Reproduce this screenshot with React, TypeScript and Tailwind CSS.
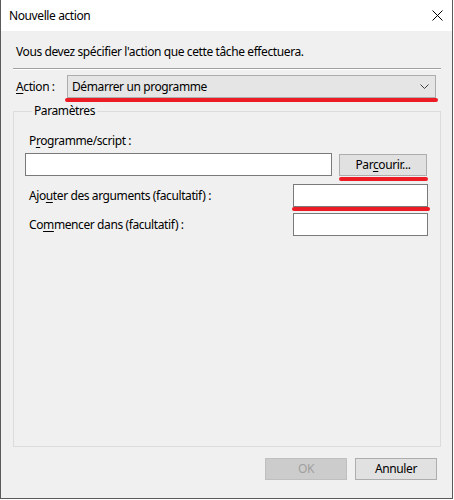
import { ReactNode } from "react";

function Mn({ children }: { children: ReactNode }) {
  return <span className="underline underline-offset-2 decoration-1">{children}</span>;
}

function RedMark({ className }: { className: string }) {
  return <div className={`h-[4px] rounded-full bg-[#ed1c24] ${className}`} />;
}

function TextBox({ className }: { className: string }) {
  return <div className={`h-[23px] border border-[#7a7a7a] bg-white ${className}`} />;
}

export default function App() {
  return (
    <div className="w-[454px] h-[500px] bg-white font-['Noto_Sans',sans-serif] text-[12px] leading-[16px] tracking-[-0.4px] text-black">
      <div className="w-[453px] h-[499px] flex flex-col border-x border-b border-[#5a5a5a]">
        {/* Title bar */}
        <div className="h-[31px] flex items-center justify-between bg-white pl-[8px] pr-[9px]">
          <span>Nouvelle action</span>
          <svg width="11" height="11" viewBox="0 0 11 11" className="text-black">
            <path d="M0.5 0.5 L10.5 10.5 M10.5 0.5 L0.5 10.5" stroke="currentColor" strokeWidth="1" />
          </svg>
        </div>

        <div className="flex-1 flex flex-col bg-[#f0f0f0] pt-[13px]">
          <p className="pl-[15px]">Vous devez spécifier l'action que cette tâche effectuera.</p>

          {/* Etched separator */}
          <div className="mt-[8px] ml-[12px] w-[428px] border-t border-b border-t-[#a0a0a0] border-b-white" />

          {/* Action row */}
          <div className="mt-[5px] flex">
            <span className="pl-[15px] w-[66px] h-[23px] flex items-center">
              <Mn>A</Mn>ction :
            </span>
            <div className="flex flex-col">
              <div className="w-[369px] h-[23px] flex items-center justify-between border border-[#adadad] bg-[#e5e5e5] pl-[4px] pr-[6px]">
                <span>Démarrer un programme</span>
                <svg width="9" height="5" viewBox="0 0 9 5">
                  <path d="M0.5 0.5 L4.5 4.5 L8.5 0.5" fill="none" stroke="#404040" strokeWidth="1" />
                </svg>
              </div>
              <RedMark className="-ml-[2px] w-[373px]" />
            </div>
          </div>

          {/* Group box */}
          <fieldset className="mt-[1px] ml-[12px] w-[428px] h-[344px] border border-[#dcdcdc] pl-[11px] pt-[14px]">
            <legend className="ml-[7px] px-[2px]">Paramètres</legend>
            <div className="pl-[4px]">
              P<Mn>r</Mn>ogramme/script :
            </div>
            <div className="mt-[4px] flex items-start">
              <TextBox className="w-[307px]" />
              <div className="ml-[7px] flex flex-col">
                <div className="w-[88px] h-[22px] mt-[1px] flex items-center justify-center border border-[#adadad] bg-[#e1e1e1]">
                  <span>
                    Par<Mn>c</Mn>ourir...
                  </span>
                </div>
                <RedMark className="mt-[1px] w-[89px]" />
              </div>
            </div>
            <div className="mt-[3px] flex items-start">
              <span className="pl-[4px] w-[268px] h-[23px] flex items-center">
                Ajo<Mn>u</Mn>ter des arguments (facultatif) :
              </span>
              <div className="flex flex-col">
                <TextBox className="w-[135px]" />
                <RedMark className="-ml-[1px] w-[138px]" />
              </div>
            </div>
            <div className="mt-[2px] flex items-start">
              <span className="pl-[4px] w-[268px] h-[23px] flex items-center">
                Co<Mn>m</Mn>mencer dans (facultatif) :
              </span>
              <TextBox className="w-[135px]" />
            </div>
          </fieldset>

          {/* Buttons */}
          <div className="mt-[11px] flex justify-end gap-[8px] pr-[15px]">
            <div className="w-[82px] h-[22px] flex items-center justify-center border border-[#bfbfbf] bg-[#cccccc] text-[#a0a0a0]">
              OK
            </div>
            <div className="w-[82px] h-[22px] flex items-center justify-center border border-[#adadad] bg-[#e1e1e1]">
              Annuler
            </div>
          </div>
        </div>
      </div>
    </div>
  );
}
